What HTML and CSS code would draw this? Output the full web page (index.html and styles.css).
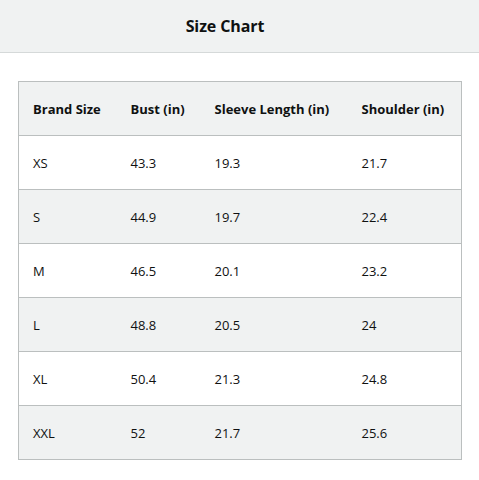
FILE: index.html
```html
<!DOCTYPE html>
<html>
<head>
<meta charset="utf-8">
<link rel="stylesheet" href="styles.css">
</head>
<body>
<header class="bar"><h1 class="title">Size Chart</h1></header>
<main class="content">
<table class="chart">
<colgroup><col class="c1"><col class="c2"><col class="c3"><col class="c4"></colgroup>
<thead>
<tr><th>Brand Size</th><th>Bust (in)</th><th>Sleeve Length (in)</th><th>Shoulder (in)</th></tr>
</thead>
<tbody>
<tr><td>XS</td><td>43.3</td><td>19.3</td><td>21.7</td></tr>
<tr><td>S</td><td>44.9</td><td>19.7</td><td>22.4</td></tr>
<tr><td>M</td><td>46.5</td><td>20.1</td><td>23.2</td></tr>
<tr><td>L</td><td>48.8</td><td>20.5</td><td>24</td></tr>
<tr><td>XL</td><td>50.4</td><td>21.3</td><td>24.8</td></tr>
<tr><td>XXL</td><td>52</td><td>21.7</td><td>25.6</td></tr>
</tbody>
</table>
</main>
</body>
</html>
```
FILE: styles.css
```css
html, body { margin: 0; padding: 0; background: #fff; }
body { font-family: "Open Sans", "Noto Sans", sans-serif; color: #0f1111; }
.bar {
  height: 52px;
  background: #f0f2f2;
  border-bottom: 1px solid #d5d9d9;
  display: flex;
  align-items: center;
  justify-content: center;
  padding-right: 29px;
}
.title { margin: 0; font-size: 16px; font-weight: 700; line-height: 20px; letter-spacing: -0.1px; }
.content { padding: 28px 18px 0 18px; }
.chart {
  width: 443px;
  border-collapse: collapse;
  table-layout: fixed;
  border: 1px solid #bbbfbf;
  font-size: 13px;
}
.c1 { width: 98px; }
.c2 { width: 84px; }
.c3 { width: 147px; }
.c4 { width: 114px; }
.chart th, .chart td {
  height: 53px;
  padding: 0 0 0 14px;
  text-align: left;
  border-bottom: 1px solid #bbbfbf;
  white-space: nowrap;
}
.chart th { font-weight: 700; background: #f0f2f2; }
.chart td { font-weight: 400; }
.chart tbody tr:nth-child(even) td { background: #f0f2f2; }
```
